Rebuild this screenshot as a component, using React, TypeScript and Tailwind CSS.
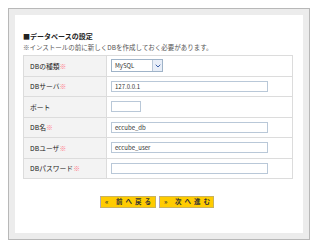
import { ChevronDown } from 'lucide-react';

const jp = { fontFamily: '"Noto Sans CJK JP", "Noto Sans", sans-serif' };

type Row = { label: string; req: boolean; kind: 'select' | 'text' | 'short'; value?: string };

const rows: Row[] = [
  { label: 'DBの種類', req: true, kind: 'select', value: 'MySQL' },
  { label: 'DBサーバ', req: true, kind: 'text', value: '127.0.0.1' },
  { label: 'ポート', req: false, kind: 'short' },
  { label: 'DB名', req: true, kind: 'text', value: 'eccube_db' },
  { label: 'DBユーザ', req: true, kind: 'text', value: 'eccube_user' },
  { label: 'DBパスワード', req: true, kind: 'text' },
];

function Field({ row }: { row: Row }) {
  if (row.kind === 'select') {
    return (
      <div className="flex h-[13px] w-[52px] items-center justify-between border border-[#9fb3c8] bg-white pl-[3px] text-[6px] text-[#333]">
        <span>{row.value}</span>
        <span className="flex h-full w-[10px] items-center justify-center border-l border-[#b9c8d8] bg-[#e8eef8]">
          <ChevronDown size={8} strokeWidth={3} className="text-[#3a5fa8]" />
        </span>
      </div>
    );
  }
  return (
    <div
      className={`flex h-[11px] items-center border border-[#b9c8d8] bg-white pl-[3px] text-[6px] text-[#333] ${
        row.kind === 'short' ? 'w-[30px]' : 'w-[157px]'
      }`}
    >
      {row.value}
    </div>
  );
}

export default function App() {
  return (
    <div className="h-[248px] w-[320px] bg-white pl-[8px] pt-[8px]" style={jp}>
      <div className="h-[232px] w-[302px] border border-[#b8b8b8] bg-[#ececec] p-[6px]">
        <div className="h-full bg-white pl-[8px] pt-[16px]">
          <div className="text-[7px] font-bold leading-[11px] text-[#222]">■データベースの設定</div>
          <div className="text-[6.5px] leading-[11px] text-[#555]">
            ※インストールの前に新しくDBを作成しておく必要があります。
          </div>
          <div className="mt-[2px] w-[270px] border-t border-[#dcdcdc]">
            {rows.map((r) => (
              <div key={r.label} className="flex h-[20.5px] border-b border-x border-[#dcdcdc]">
                <div className="flex w-[83px] items-center border-r border-[#dcdcdc] bg-[#f3f3f3] pl-[6px] text-[6.8px] text-[#222]">
                  {r.label}
                  {r.req && <span className="text-[#ff7a8a]">※</span>}
                </div>
                <div className="flex flex-1 items-center pl-[4px]">
                  <Field row={r} />
                </div>
              </div>
            ))}
          </div>
          <div className="mt-[17px] flex gap-[3px] pl-[77px]">
            <div className="flex h-[12px] w-[56px] items-center border border-[#c9b25a] border-l-[#b0a8c0] bg-[#ffcc00] pl-[4px] text-[6.5px] font-bold tracking-[3px] text-[#333]">
              « 前へ戻る
            </div>
            <div className="flex h-[12px] w-[55px] items-center border border-[#c9b25a] border-l-[#b0a8c0] bg-[#ffcc00] pl-[4px] text-[6.5px] font-bold tracking-[3px] text-[#333]">
              » 次へ進む
            </div>
          </div>
        </div>
      </div>
    </div>
  );
}
